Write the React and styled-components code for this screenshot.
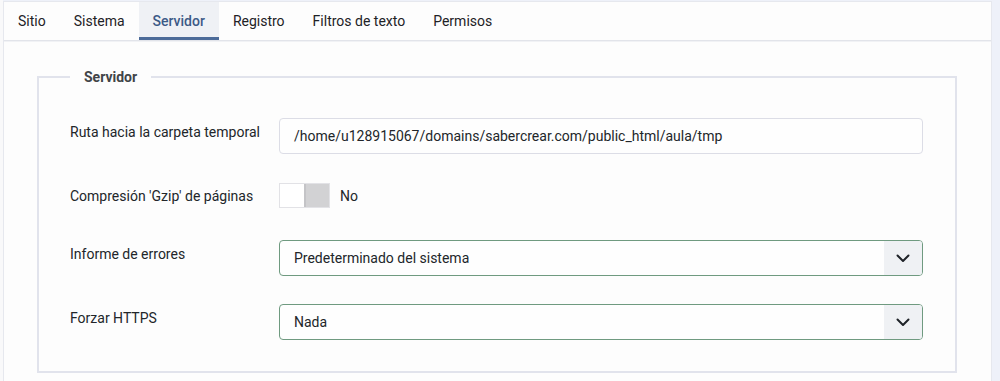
import React from 'react';
import styled, { createGlobalStyle } from 'styled-components';

const Global = createGlobalStyle`
    body {
        margin: 0;
        background: #eef1f9;
        font-family: Roboto, "Liberation Sans", sans-serif;
        color: #22262a;
    }
`

const Page = styled.div`
    display: flex;
    height: 381px;
    overflow: hidden;
    padding-left: 3px;
    padding-right: 8px;
    background: linear-gradient(to right, #f9f9fa 3px, transparent 3px);
`

const Card = styled.div`
    flex: 1;
    background: #fdfdfd;
    border: 1px solid #e6e8ee;
    border-bottom: none;
    margin-top: 1px;
    display: flex;
    flex-direction: column;
`

const TabBar = styled.div`
    display: flex;
    flex-shrink: 0;
    height: 38px;
    border-bottom: 1px solid #e2e4ea;
    box-shadow: 0 1px 0 #f1f2f5;
`

const Tab = styled.div`
    padding: 0 14px;
    display: flex;
    align-items: center;
    font-size: 14px;
    color: ${p => p.active ? '#3c5a87' : '#1e2226'};
    font-weight: ${p => p.active ? 500 : 400};
    background: ${p => p.active ? '#eff1f5' : 'transparent'};
    border-bottom: 3px solid ${p => p.active ? '#4c6b99' : 'transparent'};
    padding-top: 3px;
`

const Body = styled.div`
    flex-shrink: 0;
    padding: 28px 34px 0 33px;
`

const Fieldset = styled.fieldset`
    margin: 0;
    border: 2px solid #e1e3ec;
    padding: 33px 32px 31px 31px;
    min-width: 0;
    legend {
        margin-left: 0;
        padding: 0 14px;
        font-size: 14px;
        font-weight: 700;
        color: #414448;
    }
`

const Row = styled.div`
    display: grid;
    grid-template-columns: 209px 1fr;
    align-items: start;
    margin-top: ${p => p.gap || 0}px;
`

const Label = styled.div`
    font-size: 14px;
    line-height: 18px;
    padding-top: 5px;
    color: #22262a;
`

const TextInput = styled.div`
    height: 36px;
    box-sizing: border-box;
    border: 1px solid #dcdde6;
    border-radius: 4px;
    background: #fefefe;
    padding: 0 14px;
    display: flex;
    align-items: center;
    font-size: 14px;
`

const Select = styled.div`
    height: 36px;
    box-sizing: border-box;
    border: 1px solid #6f9a80;
    border-radius: 4px;
    background: #fefefe;
    display: flex;
    align-items: center;
    font-size: 14px;
    overflow: hidden;
    span {
        flex: 1;
        padding-left: 14px;
    }
`

const Caret = styled.div`
    width: 38px;
    height: 100%;
    background: #eff1f4;
    display: flex;
    align-items: center;
    justify-content: center;
`

const SwitchWrap = styled.div`
    display: flex;
    align-items: center;
    gap: 10px;
    padding-top: 1px;
    font-size: 14px;
    font-weight: 400;
`

const Switch = styled.div`
    width: 51px;
    height: 25px;
    box-sizing: border-box;
    border: 1px solid #e2e2e6;
    background: #ffffff;
    display: flex;
    justify-content: flex-end;
`

const Knob = styled.div`
    width: 25px;
    height: 100%;
    background: #d2d2d4;
    border-left: 2px solid #c4c4c7;
    box-sizing: border-box;
`

function Chevron() {
    return (
        <svg width="14" height="9" viewBox="0 0 14 9">
            <path d="M1.5 1.5 L7 7 L12.5 1.5" fill="none" stroke="#1f2328" strokeWidth="2" strokeLinecap="round" strokeLinejoin="round" />
        </svg>
    )
}

const tabs = ['Sitio', 'Sistema', 'Servidor', 'Registro', 'Filtros de texto', 'Permisos']

export default function App() {
    return (
        <>
            <Global />
            <Page>
                <Card>
                    <TabBar>
                        {tabs.map(t => <Tab key={t} active={t === 'Servidor'}>{t}</Tab>)}
                    </TabBar>
                    <Body>
                        <Fieldset>
                            <legend>Servidor</legend>
                            <Row>
                                <Label>Ruta hacia la carpeta temporal</Label>
                                <TextInput>/home/u128915067/domains/sabercrear.com/public_html/aula/tmp</TextInput>
                            </Row>
                            <Row gap={28}>
                                <Label>Compresión 'Gzip' de páginas</Label>
                                <SwitchWrap>
                                    <Switch><Knob /></Switch>
                                    No
                                </SwitchWrap>
                            </Row>
                            <Row gap={32}>
                                <Label>Informe de errores</Label>
                                <Select><span>Predeterminado del sistema</span><Caret><Chevron /></Caret></Select>
                            </Row>
                            <Row gap={28}>
                                <Label>Forzar HTTPS</Label>
                                <Select><span>Nada</span><Caret><Chevron /></Caret></Select>
                            </Row>
                        </Fieldset>
                    </Body>
                </Card>
            </Page>
        </>
    )
}
